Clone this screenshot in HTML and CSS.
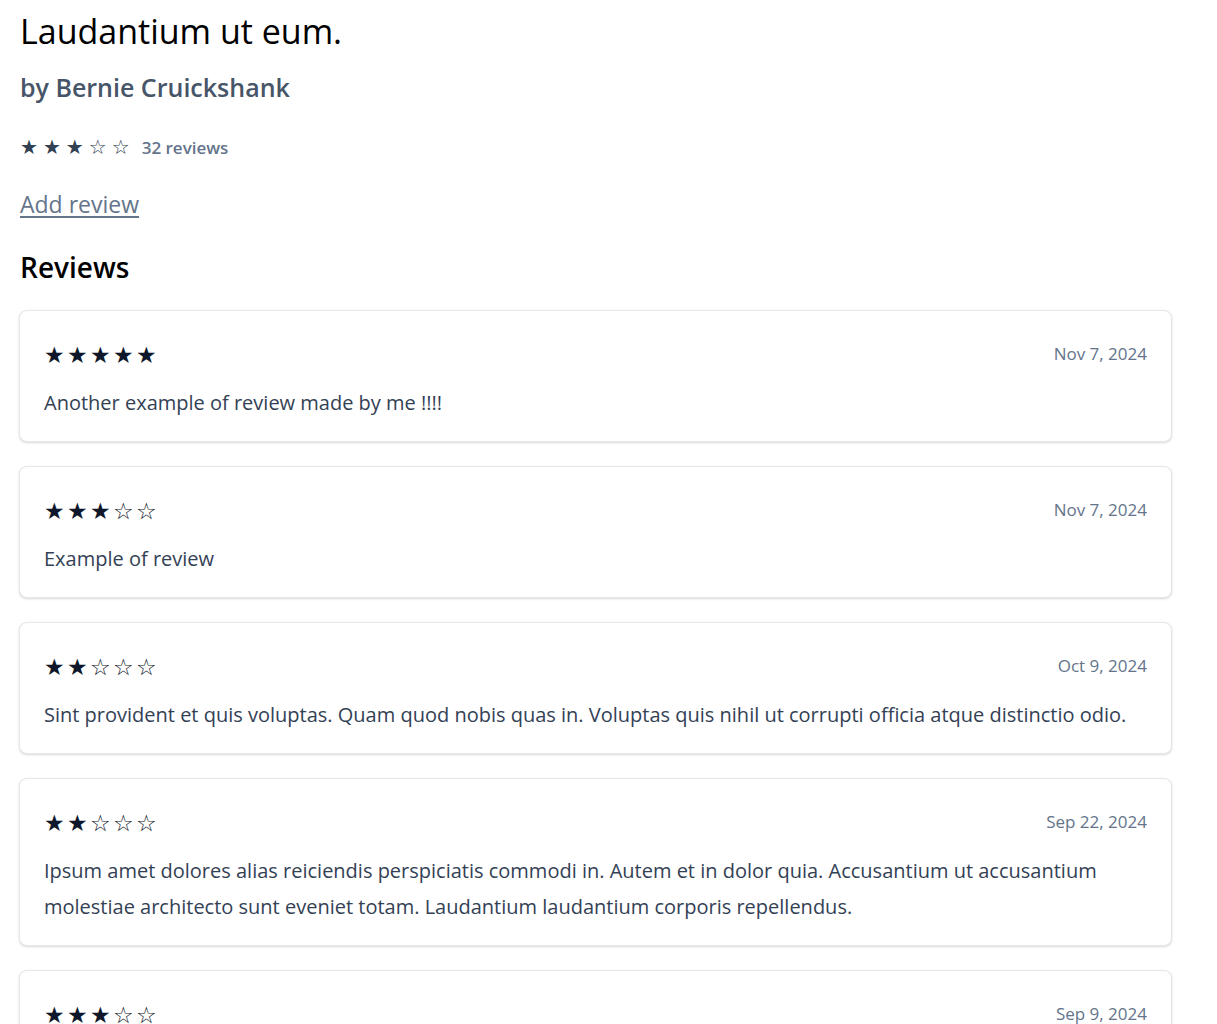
FILE: index.html
```html
<!DOCTYPE html>
<html lang="en">
<head>
<meta charset="utf-8">
<title>Laudantium ut eum.</title>
<link rel="stylesheet" href="styles.css">
</head>
<body>
<main class="page">
  <h1 class="title">Laudantium ut eum.</h1>
  <h2 class="author">by Bernie Cruickshank</h2>
  <div class="summary">
    <span class="stars stars-sm">★★★☆☆</span>
    <span class="count">32 reviews</span>
  </div>
  <a class="add-link" href="#">Add review</a>
  <h3 class="section-title">Reviews</h3>
  <div class="reviews">
    <article class="card">
      <div class="card-head"><span class="stars">★★★★★</span><span class="date">Nov 7, 2024</span></div>
      <p class="body">Another example of review made by me !!!!</p>
    </article>
    <article class="card">
      <div class="card-head"><span class="stars">★★★☆☆</span><span class="date">Nov 7, 2024</span></div>
      <p class="body">Example of review</p>
    </article>
    <article class="card">
      <div class="card-head"><span class="stars">★★☆☆☆</span><span class="date">Oct 9, 2024</span></div>
      <p class="body">Sint provident et quis voluptas. Quam quod nobis quas in. Voluptas quis nihil ut corrupti officia atque distinctio odio.</p>
    </article>
    <article class="card">
      <div class="card-head"><span class="stars">★★☆☆☆</span><span class="date">Sep 22, 2024</span></div>
      <p class="body">Ipsum amet dolores alias reiciendis perspiciatis commodi in. Autem et in dolor quia. Accusantium ut accusantium molestiae architecto sunt eveniet totam. Laudantium laudantium corporis repellendus.</p>
    </article>
    <article class="card">
      <div class="card-head"><span class="stars">★★★☆☆</span><span class="date">Sep 9, 2024</span></div>
      <p class="body">Quia et in sint dolor.</p>
    </article>
  </div>
</main>
</body>
</html>
```
FILE: styles.css
```css
* { box-sizing: border-box; }
html, body { margin: 0; padding: 0; background: #fff; }
body {
  font-family: "Open Sans", "Noto Sans", sans-serif;
  color: #334155;
}
.page {
  width: 1192px;
  padding: 7px 20px 20px 19px;
}
.title {
  margin: 0 0 0 1px;
  font-size: 34px;
  font-weight: 400;
  line-height: 48px;
  color: #000;
}
.author {
  margin: 12px 0 0 1px;
  font-size: 25px;
  font-weight: 600;
  line-height: 40px;
  color: #475569;
}
.summary {
  margin: 25px 0 0 1px;
  display: flex;
  align-items: center;
  gap: 7px;
  height: 30px;
}
.stars {
  font-family: "DejaVu Sans", sans-serif;
  font-size: 23px;
  letter-spacing: 2.4px;
  color: #0f172a;
  line-height: 1;
}
.stars-sm {
  font-size: 20px;
  letter-spacing: 5px;
  color: #334155;
}
.count {
  font-size: 17px;
  font-weight: 600;
  color: #64748b;
}
.add-link {
  display: inline-block;
  margin: 26px 0 0 1px;
  font-size: 23px;
  line-height: 32px;
  color: #64748b;
  text-decoration: underline;
  text-underline-offset: 3px;
}
.section-title {
  margin: 29px 0 0 1px;
  font-size: 28px;
  font-weight: 600;
  line-height: 36px;
  color: #000;
}
.reviews {
  margin-top: 25px;
  display: flex;
  flex-direction: column;
  gap: 24px;
}
.card {
  border: 1px solid #e5e7eb;
  border-radius: 8px;
  box-shadow: 0 1px 3px rgba(0,0,0,0.1), 0 1px 2px rgba(0,0,0,0.06);
  padding: 26px 24px 20px 24px;
  background: #fff;
}
.card-head {
  display: flex;
  justify-content: space-between;
  align-items: center;
  height: 36px;
}
.date {
  font-size: 17px;
  color: #64748b;
  margin-bottom: 4px;
}
.body {
  margin: 12px 0 0 0;
  font-size: 20px;
  line-height: 36px;
  color: #334155;
}
```
